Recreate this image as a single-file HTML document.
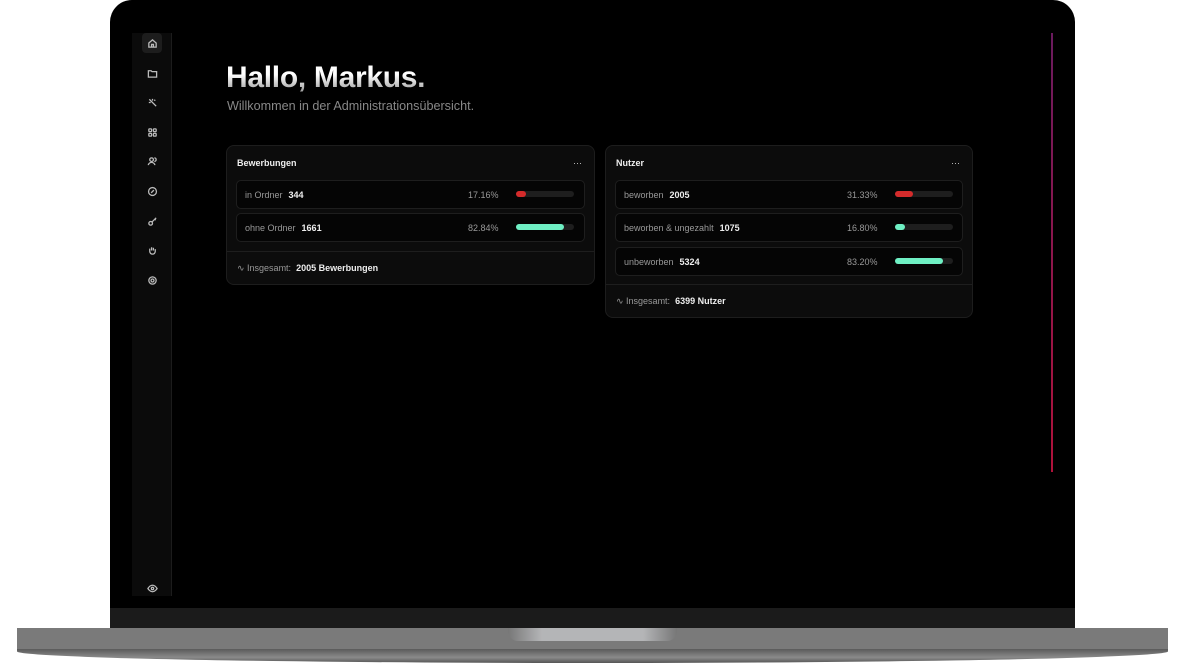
<!DOCTYPE html><html><head><style>
*{margin:0;padding:0;box-sizing:border-box}
body{width:1185px;height:668px;background:#fff;position:relative;overflow:hidden;font-family:"Liberation Sans",sans-serif}
.bez{position:absolute;left:110px;top:0;width:965px;height:628px;background:#000;border-radius:22px 22px 0 0}
.chin{position:absolute;left:110px;top:608px;width:965px;height:20px;background:#1b1b1b}
.base{position:absolute;left:17px;top:628px;width:1151px;height:22px;background:#7a7a7a}
.base2{position:absolute;left:17px;top:649px;width:1151px;height:14px;background:linear-gradient(#5a5a5a,#8a8a8a 60%,#555);border-radius:0 0 60% 60%/0 0 100% 100%}
.notch{position:absolute;left:508px;top:628px;width:169px;height:13px;background:linear-gradient(90deg,#777,#b4b5b7 20%,#b4b5b7 80%,#777);border-radius:0 0 10px 10px}
.side{position:absolute;left:132px;top:33px;width:40px;height:563px;background:#0b0b0b;border-right:1px solid #1c1c1c}
.ic{position:absolute;left:10px;width:20px;height:20px;display:flex;align-items:center;justify-content:center}
.ic svg{width:11px;height:11px;stroke:#bbb;fill:none;stroke-width:1.4}
.line{position:absolute;left:1051px;top:33px;width:2px;height:439px;background:linear-gradient(#6a1a5e,#b0123a)}
h1{position:absolute;left:226px;top:61px;font-size:30px;font-weight:bold;background:linear-gradient(#fff 40%,#8a8a8a);-webkit-background-clip:text;color:transparent;letter-spacing:-0.3px}
.sub{position:absolute;left:227px;top:99px;font-size:12.6px;color:#888}
.card{position:absolute;background:#0c0c0c;border:1px solid #1d1d1d;border-radius:8px}
.t{position:absolute;left:10px;top:12px;font-size:9px;color:#eee;font-weight:bold}
.dots{position:absolute;right:12px;top:12px;color:#ccc;font-size:9px;letter-spacing:0px}
.row{position:absolute;left:9px;height:29px;border:1px solid #1e1e1e;border-radius:5px;background:#050505;font-size:9px;color:#999}
.row .l{position:absolute;left:8px;top:9px}
.row .l b{color:#eee;margin-left:6px}
.row .p{position:absolute;top:9px}
.bar{position:absolute;top:10px;width:58px;height:6px;border-radius:3px;background:#1e1e1e}
.bar i{display:block;height:6px;border-radius:3px}
.foot{position:absolute;left:0;right:0;bottom:0;height:33px;border-top:1px solid #1e1e1e;font-size:9px;color:#999;padding:11px 0 0 10px}
.foot b{color:#eee}
</style></head><body>
<div class="bez"></div><div class="chin"></div>
<div class="base"></div><div class="base2"></div><div class="notch"></div>
<div class="side">
<div class="ic" style="top:0;background:#1d1d1d;border-radius:4px"><svg viewBox="0 0 12 12"><path d="M2 5.5 6 2l4 3.5V10H2z M5 10V7h2v3"/></svg></div>
<div class="ic" style="top:30px"><svg viewBox="0 0 12 12"><path d="M1.5 3h3l1 1h5v6h-9z"/></svg></div>
<div class="ic" style="top:59px"><svg viewBox="0 0 12 12"><path d="M3 3l7 7M2 6h2M6 2v2M8 4l1-1M2.5 2.5l.8.8"/></svg></div>
<div class="ic" style="top:89px"><svg viewBox="0 0 12 12"><rect x="2" y="2" width="3" height="3" rx=".7"/><rect x="7" y="2" width="3" height="3" rx=".7"/><rect x="2" y="7" width="3" height="3" rx=".7"/><rect x="7" y="7" width="3" height="3" rx=".7"/></svg></div>
<div class="ic" style="top:118px"><svg viewBox="0 0 12 12"><circle cx="5" cy="4" r="2"/><path d="M1.5 10c0-2 2-3 3.5-3s3.5 1 3.5 3M8 2a2 2 0 010 4"/></svg></div>
<div class="ic" style="top:148px"><svg viewBox="0 0 12 12"><circle cx="6" cy="6" r="4.3"/><path d="M4.5 7.5 7.5 4.5"/></svg></div>
<div class="ic" style="top:178px"><svg viewBox="0 0 12 12"><circle cx="4" cy="8" r="2"/><path d="M5.5 6.5 10 2M8.5 3.5l1 1"/></svg></div>
<div class="ic" style="top:207px"><svg viewBox="0 0 12 12"><path d="M3 6V4M5 6V2.5M7 6V3M9 6V4.5v2.5a3 3 0 01-6 0V6"/></svg></div>
<div class="ic" style="top:237px"><svg viewBox="0 0 12 12"><circle cx="6" cy="6" r="1.6"/><circle cx="6" cy="6" r="4"/></svg></div>
<div class="ic" style="top:545px"><svg viewBox="0 0 12 12"><path d="M1 6s2-3.5 5-3.5S11 6 11 6 9 9.5 6 9.5 1 6 1 6z"/><circle cx="6" cy="6" r="1.3"/></svg></div>
</div>
<div class="line"></div>
<h1>Hallo, Markus.</h1>
<div class="sub">Willkommen in der Administrationsübersicht.</div>

<div class="card" style="left:226px;top:145px;width:369px;height:140px">
<div class="t">Bewerbungen</div><div class="dots">···</div>
<div class="row" style="top:34px;width:349px"><span class="l">in Ordner<b>344</b></span><span class="p" style="left:231px">17.16%</span><div class="bar" style="left:279px"><i style="width:10px;background:#d42b2b"></i></div></div>
<div class="row" style="top:67px;width:349px"><span class="l">ohne Ordner<b>1661</b></span><span class="p" style="left:231px">82.84%</span><div class="bar" style="left:279px"><i style="width:48px;background:#6ff0c4"></i></div></div>
<div class="foot">∿ Insgesamt:&nbsp; <b>2005 Bewerbungen</b></div>
</div>

<div class="card" style="left:605px;top:145px;width:368px;height:173px">
<div class="t">Nutzer</div><div class="dots">···</div>
<div class="row" style="top:34px;width:348px"><span class="l">beworben<b>2005</b></span><span class="p" style="left:231px">31.33%</span><div class="bar" style="left:279px"><i style="width:18px;background:#d42b2b"></i></div></div>
<div class="row" style="top:67px;width:348px"><span class="l">beworben &amp; ungezahlt<b>1075</b></span><span class="p" style="left:231px">16.80%</span><div class="bar" style="left:279px"><i style="width:10px;background:#6ff0c4"></i></div></div>
<div class="row" style="top:101px;width:348px"><span class="l">unbeworben<b>5324</b></span><span class="p" style="left:231px">83.20%</span><div class="bar" style="left:279px"><i style="width:48px;background:#6ff0c4"></i></div></div>
<div class="foot">∿ Insgesamt:&nbsp; <b>6399 Nutzer</b></div>
</div>
</body></html>
